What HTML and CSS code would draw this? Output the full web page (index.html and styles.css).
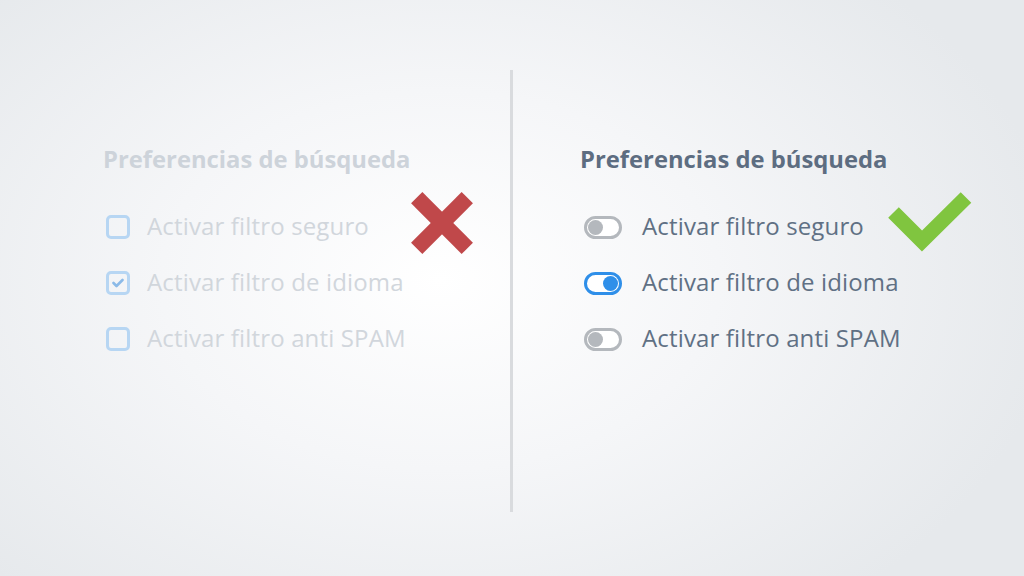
FILE: index.html
```html
<!DOCTYPE html>
<html lang="es">
<head>
<meta charset="UTF-8">
<title>Preferencias de búsqueda</title>
<meta name="viewport" content="width=device-width, initial-scale=1.0">
<link rel="stylesheet" href="styles.css">
</head>

<body>

<main class="stage">

<section class="panel bad">
<h2>Preferencias de búsqueda</h2>
<div class="body">
<ul class="opts">
<li><span class="check"></span><span>Activar filtro seguro</span></li>
<li><span class="check on"><svg viewBox="0 0 12 10" width="12" height="10"><polyline points="1.5,5 4.5,8 10.5,2"/></svg></span><span>Activar filtro de idioma</span></li>
<li><span class="check"></span><span>Activar filtro anti SPAM</span></li>
</ul>
<svg class="mark cross" viewBox="0 0 62 62" width="62" height="62">
<line x1="5.7" y1="5.7" x2="56.3" y2="56.3"/>
<line x1="56.3" y1="5.7" x2="5.7" y2="56.3"/>
</svg>
</div>
</section>

<div class="divider"></div>

<section class="panel good">
<h2>Preferencias de búsqueda</h2>
<div class="body">
<ul class="opts">
<li><span class="switch"></span><span>Activar filtro seguro</span></li>
<li><span class="switch on"></span><span>Activar filtro de idioma</span></li>
<li><span class="switch"></span><span>Activar filtro anti SPAM</span></li>
</ul>
<svg class="mark tick" viewBox="0 0 86 64" width="86" height="64">
<polyline points="6.5,22.5 35,51 79,7.5"/>
</svg>
</div>
</section>

</main>

</body>
</html>
```

FILE: styles.css
```css
*{box-sizing:border-box}
body{margin:0;height:576px;overflow:hidden;font-family:"Open Sans",Lato,sans-serif;background:radial-gradient(ellipse 620px 420px at 440px 280px,#ffffff 0%,#f5f6f8 45%,#e6e9ec 100%)}
.stage{display:flex;align-items:flex-start;padding-top:70px;height:576px}
.divider{width:3px;height:442px;background:#d9dbde;flex:none}
.panel{flex:none;padding-top:76px}
.bad{width:510px;padding-left:103px}
.good{width:511px;padding-left:67px}
h2{margin:0;font-size:23.8px;line-height:26px;font-weight:700;white-space:nowrap}
.bad h2{color:#cdd3da}
.good h2{color:#5d6d81}
.body{display:flex;align-items:flex-start;margin-top:18px}
.opts{list-style:none;margin:25px 0 0;padding:0 0 0 3px;display:flex;flex-direction:column;gap:32px}
.bad .opts{width:308px;color:#d1d6dc}
.good .opts{width:310px;padding-left:4px;color:#607084}
.opts li{display:flex;align-items:center;height:24px;font-size:24px;letter-spacing:.15px;white-space:nowrap}
.opts li span:last-child{margin-top:-3px}
.check{width:24px;height:24px;border:3px solid #b7d6f3;border-radius:5px;margin-right:17px;display:flex;align-items:center;justify-content:center;flex:none}
.check svg{fill:none;stroke:#8bbae8;stroke-width:2.6;stroke-linecap:round;stroke-linejoin:round}
.switch{width:38px;height:23px;border:3px solid #b4b8bd;border-radius:99px;background:#fff;margin-right:20px;padding:1px;display:flex;flex:none}
.switch::before{content:"";width:15px;height:15px;border-radius:50%;background:#b4b8bd}
.switch.on{border-color:#2f8fe9;justify-content:flex-end}
.switch.on::before{background:#2f8fe9}
.mark{flex:none;fill:none}
.cross{margin-top:2px;stroke:#c0484a;stroke-width:16}
.tick{margin-top:0;margin-left:-3px;stroke:#80c53f;stroke-width:15;stroke-linejoin:miter}
```
